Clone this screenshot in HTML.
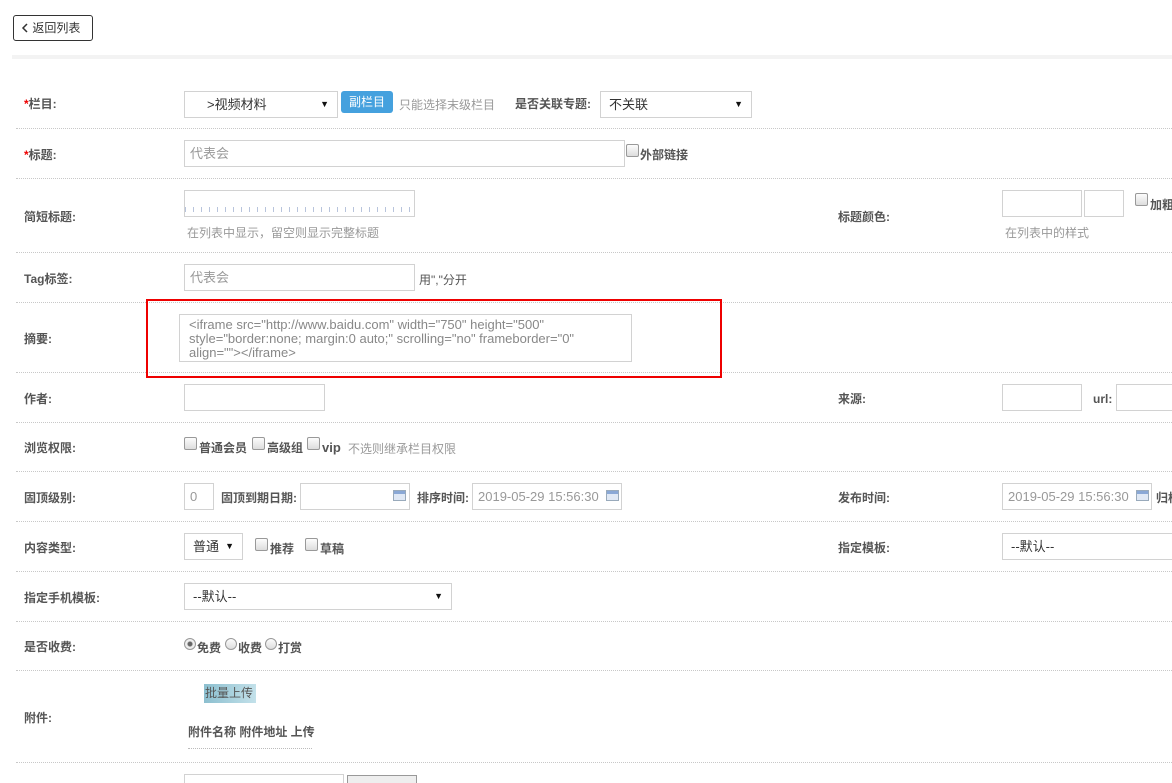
<!DOCTYPE html>
<html><head><meta charset="utf-8"><style>
*{margin:0;padding:0;box-sizing:border-box}
html,body{width:1172px;height:783px;overflow:hidden}
body{background:#fff;font-family:"Liberation Sans","Noto Sans CJK SC",sans-serif;font-size:12px;color:#555;position:relative}
.a{position:absolute;white-space:nowrap}
.l{position:absolute;font-weight:bold;color:#555;line-height:14px;white-space:nowrap}
.hr{position:absolute;left:16px;right:0;height:0;border-top:1px dotted #c8c8c8}
.in{position:absolute;border:1px solid #d2d2d2;background:#fff;color:#999;padding-left:5px;line-height:25px;height:27px;white-space:nowrap;font-size:13px}
.sel{position:absolute;border:1px solid #d2d2d2;background:#fff;color:#333;height:27px;line-height:25px;font-size:13px;white-space:nowrap}
.sel i{position:absolute;right:8px;top:0;font-style:normal;font-size:9px;color:#111}
.cb{position:absolute;width:13px;height:13px;border:1px solid #999;border-radius:2px;background:linear-gradient(#fcfcfc,#ddd)}
.rd{position:absolute;width:12px;height:12px;border:1px solid #999;border-radius:50%;background:linear-gradient(#fcfcfc,#ddd)}
.g{color:#999}
.cal{position:absolute;width:13px;height:11px;background:linear-gradient(#8aa8d6 0 3px,#dfe8f5 3px);border:1px solid #9ab}
.red{color:#e00}
</style></head><body>
<div class="a" style="left:13px;top:15px;width:80px;height:26px;border:1px solid #333;border-radius:3px;line-height:24px;color:#333;padding-left:7px;font-size:12px">
<svg width="8" height="10" viewBox="0 0 8 10" style="vertical-align:-1px"><path d="M6 1L2 5l4 4" stroke="#333" stroke-width="1.5" fill="none"/></svg> 返回列表</div>
<div class="a" style="left:12px;right:0;top:55px;height:4px;background:#f3f3f3"></div>

<div class="l" style="left:24px;top:97px"><span class="red">*</span>栏目:</div>
<div class="sel" style="left:184px;top:91px;width:154px;padding-left:22px">&gt;视频材料<i>▼</i></div>
<div class="a" style="left:341px;top:91px;width:52px;height:22px;background:#45a1de;border-radius:3px;color:#fff;line-height:22px;text-align:center">副栏目</div>
<div class="a g" style="left:399px;top:96px">只能选择末级栏目</div>
<div class="l" style="left:515px;top:97px">是否关联专题:</div>
<div class="sel" style="left:600px;top:91px;width:152px;padding-left:8px">不关联<i>▼</i></div>
<div class="hr" style="top:128px"></div>

<div class="l" style="left:24px;top:148px"><span class="red">*</span>标题:</div>
<div class="in" style="left:184px;top:140px;width:441px">代表会</div>
<div class="cb" style="left:626px;top:144px"></div>
<div class="l" style="left:640px;top:148px">外部链接</div>
<div class="hr" style="top:178px"></div>

<div class="l" style="left:24px;top:210px">简短标题:</div>
<div class="a" style="left:184px;top:190px;width:231px;height:27px;border:1px solid #d2d2d2"><div style="position:absolute;left:0;right:0;bottom:4px;height:5px;background:repeating-linear-gradient(90deg,#b8c4dc 0 1px,transparent 1px 8px)"></div></div>
<div class="a g" style="left:187px;top:224px">在列表中显示，留空则显示完整标题</div>
<div class="l" style="left:838px;top:210px">标题颜色:</div>
<div class="in" style="left:1002px;top:190px;width:80px"></div>
<div class="in" style="left:1084px;top:190px;width:40px"></div>
<div class="cb" style="left:1135px;top:193px"></div>
<div class="l" style="left:1150px;top:198px">加粗</div>
<div class="a g" style="left:1005px;top:224px">在列表中的样式</div>
<div class="hr" style="top:252px"></div>

<div class="l" style="left:24px;top:272px">Tag标签:</div>
<div class="in" style="left:184px;top:264px;width:231px">代表会</div>
<div class="a" style="left:419px;top:271px;color:#555">用","分开</div>
<div class="hr" style="top:302px"></div>

<div class="l" style="left:24px;top:332px">摘要:</div>
<div class="a" style="left:179px;top:314px;width:453px;height:48px;border:1px solid #d2d2d2;color:#888;line-height:14px;padding:3px 20px 0 9px;white-space:normal;font-size:13px">&lt;iframe src="http://www.baidu.com" width="750" height="500" style="border:none; margin:0 auto;" scrolling="no" frameborder="0" align=""&gt;&lt;/iframe&gt;</div>
<div class="hr" style="top:372px"></div>
<div class="a" style="left:146px;top:299px;width:576px;height:79px;border:2px solid #e00"></div>

<div class="l" style="left:24px;top:392px">作者:</div>
<div class="in" style="left:184px;top:384px;width:141px"></div>
<div class="l" style="left:838px;top:392px">来源:</div>
<div class="in" style="left:1002px;top:384px;width:80px"></div>
<div class="l" style="left:1093px;top:392px">url:</div>
<div class="in" style="left:1116px;top:384px;width:70px"></div>
<div class="hr" style="top:422px"></div>

<div class="l" style="left:24px;top:441px">浏览权限:</div>
<div class="cb" style="left:184px;top:437px"></div><div class="l" style="left:199px;top:441px">普通会员</div>
<div class="cb" style="left:252px;top:437px"></div><div class="l" style="left:267px;top:441px">高级组</div>
<div class="cb" style="left:307px;top:437px"></div><div class="l" style="left:322px;top:441px;font-size:13px">vip</div>
<div class="a g" style="left:348px;top:440px">不选则继承栏目权限</div>
<div class="hr" style="top:471px"></div>

<div class="l" style="left:24px;top:491px">固顶级别:</div>
<div class="in" style="left:184px;top:483px;width:30px">0</div>
<div class="l" style="left:221px;top:491px">固顶到期日期:</div>
<div class="in" style="left:300px;top:483px;width:110px"></div><div class="cal" style="left:393px;top:490px"></div>
<div class="l" style="left:417px;top:491px">排序时间:</div>
<div class="in" style="left:472px;top:483px;width:150px">2019-05-29 15:56:30</div><div class="cal" style="left:606px;top:490px"></div>
<div class="l" style="left:838px;top:491px">发布时间:</div>
<div class="in" style="left:1002px;top:483px;width:150px">2019-05-29 15:56:30</div><div class="cal" style="left:1136px;top:490px"></div>
<div class="l" style="left:1156px;top:491px">归档</div>
<div class="hr" style="top:521px"></div>

<div class="l" style="left:24px;top:541px">内容类型:</div>
<div class="sel" style="left:184px;top:533px;width:59px;padding-left:8px">普通<i>▼</i></div>
<div class="cb" style="left:255px;top:538px"></div><div class="l" style="left:270px;top:542px">推荐</div>
<div class="cb" style="left:305px;top:538px"></div><div class="l" style="left:320px;top:542px">草稿</div>
<div class="l" style="left:838px;top:541px">指定模板:</div>
<div class="sel" style="left:1002px;top:533px;width:180px;padding-left:8px">--默认--</div>
<div class="hr" style="top:571px"></div>

<div class="l" style="left:24px;top:591px">指定手机模板:</div>
<div class="sel" style="left:184px;top:583px;width:268px;padding-left:8px">--默认--<i>▼</i></div>
<div class="hr" style="top:621px"></div>

<div class="l" style="left:24px;top:640px">是否收费:</div>
<div class="rd" style="left:184px;top:638px;background:radial-gradient(#666 0 2px,#eee 3px)"></div><div class="l" style="left:197px;top:641px">免费</div>
<div class="rd" style="left:225px;top:638px"></div><div class="l" style="left:238px;top:641px">收费</div>
<div class="rd" style="left:265px;top:638px"></div><div class="l" style="left:278px;top:641px">打赏</div>
<div class="hr" style="top:670px"></div>

<div class="l" style="left:24px;top:711px">附件:</div>
<div class="a" style="left:204px;top:684px;width:52px;height:19px;background:linear-gradient(90deg,#8cbfcf,#c3e1ea);color:#555;line-height:19px;padding-left:1px">批量上传</div>
<div class="l" style="left:188px;top:725px">附件名称 附件地址 上传</div>
<div class="a" style="left:188px;top:748px;width:124px;border-top:1px dotted #bbb"></div>
<div class="hr" style="top:762px"></div>
<div class="in" style="left:184px;top:774px;width:160px"></div>
<div class="a" style="left:347px;top:775px;width:70px;height:20px;border:1px solid #999;background:#eee"></div>
</body></html>
